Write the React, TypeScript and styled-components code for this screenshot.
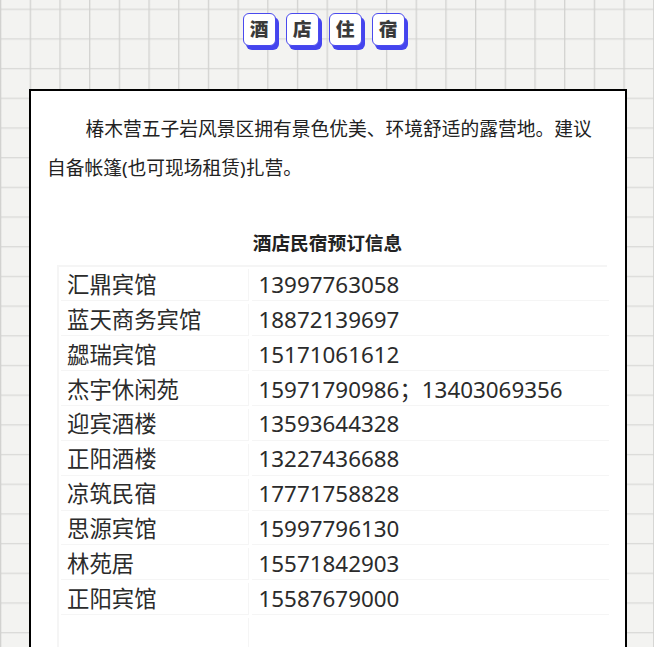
import React from "react";
import styled, { createGlobalStyle } from "styled-components";

const GlobalStyle = createGlobalStyle`
  html, body {
    margin: 0;
    padding: 0;
  }
  body {
    height: 647px;
    overflow: hidden;
    font-family: "Noto Sans", "Noto Sans CJK SC", sans-serif;
    background-color: #f3f3f1;
    background-image:
      linear-gradient(to right, #d2d2d0 0, #d2d2d0 1px, transparent 1.7px),
      linear-gradient(to bottom, #dadad8 0, #dadad8 1px, transparent 1.7px);
    background-size: 29.7px 29.7px;
    background-position: 0 8.6px;
  }
`;

const Page = styled.div`
  display: flex;
  flex-direction: column;
  align-items: center;
  padding-top: 13px;
`;

const ChipRow = styled.div`
  display: flex;
  gap: 10px;
  margin-left: -7px;
`;

const Chip = styled.span`
  box-sizing: border-box;
  width: 33px;
  height: 33px;
  display: flex;
  align-items: center;
  justify-content: center;
  background: #fff;
  border: 1px solid #4a4aee;
  border-radius: 6px;
  box-shadow: 3px 4px 0 #4444ee;
  color: #3a3a3a;
  font-size: 18.7px;
  font-weight: 900;
  line-height: 1;
`;

const Card = styled.section`
  box-sizing: border-box;
  width: 598px;
  margin-top: 43px;
  margin-left: 2px;
  padding: 18.4px 17px 40px 16px;
  background: #fff;
  border: 2px solid #000;
`;

const Intro = styled.p`
  margin: 0;
  font-size: 18.75px;
  line-height: 39px;
  text-indent: 38.5px;
  color: #222;
`;

const TableTitle = styled.h3`
  margin: 41.6px 0 0;
  text-align: center;
  font-size: 18.7px;
  font-weight: 700;
  line-height: 28px;
  color: #222;
`;

const BookingGrid = styled.div`
  box-sizing: border-box;
  width: 550px;
  margin: 8px 0 0 10px;
  padding: 2.5px 0 0 2px;
  display: grid;
  grid-template-columns: 187.5px 357px;
  grid-auto-rows: 32px;
  column-gap: 3px;
  row-gap: 2.85px;
  border-top: 2px solid #f5f5f5;
  border-left: 2px solid #f5f5f5;
`;

const Cell = styled.div<{ $phone?: boolean }>`
  box-sizing: border-box;
  display: flex;
  align-items: center;
  padding-left: ${({ $phone }) => ($phone ? "7px" : "6px")};
  border-bottom: 1.5px solid #f5f5f5;
  border-right: ${({ $phone }) => ($phone ? "0" : "1.5px solid #f5f5f5")};
  font-size: 22.4px;
  line-height: 30px;
  color: #2b2b2b;
  white-space: nowrap;
`;

const hotels = [
  ["汇鼎宾馆", "13997763058"],
  ["蓝天商务宾馆", "18872139697"],
  ["勰瑞宾馆", "15171061612"],
  ["杰宇休闲苑", "15971790986；13403069356"],
  ["迎宾酒楼", "13593644328"],
  ["正阳酒楼", "13227436688"],
  ["凉筑民宿", "17771758828"],
  ["思源宾馆", "15997796130"],
  ["林苑居", "15571842903"],
  ["正阳宾馆", "15587679000"],
  ["", ""],
];

export default function App() {
  return (
    <Page>
      <GlobalStyle />
      <ChipRow>
        {["酒", "店", "住", "宿"].map((c) => (
          <Chip key={c}>{c}</Chip>
        ))}
      </ChipRow>
      <Card>
        <Intro>
          椿木营五子岩风景区拥有景色优美、环境舒适的露营地。建议自备帐篷(也可现场租赁)扎营。
        </Intro>
        <TableTitle>酒店民宿预订信息</TableTitle>
        <BookingGrid>
          {hotels.map(([name, phone], i) => (
            <React.Fragment key={i}>
              <Cell>{name}</Cell>
              <Cell $phone>{phone}</Cell>
            </React.Fragment>
          ))}
        </BookingGrid>
      </Card>
    </Page>
  );
}
